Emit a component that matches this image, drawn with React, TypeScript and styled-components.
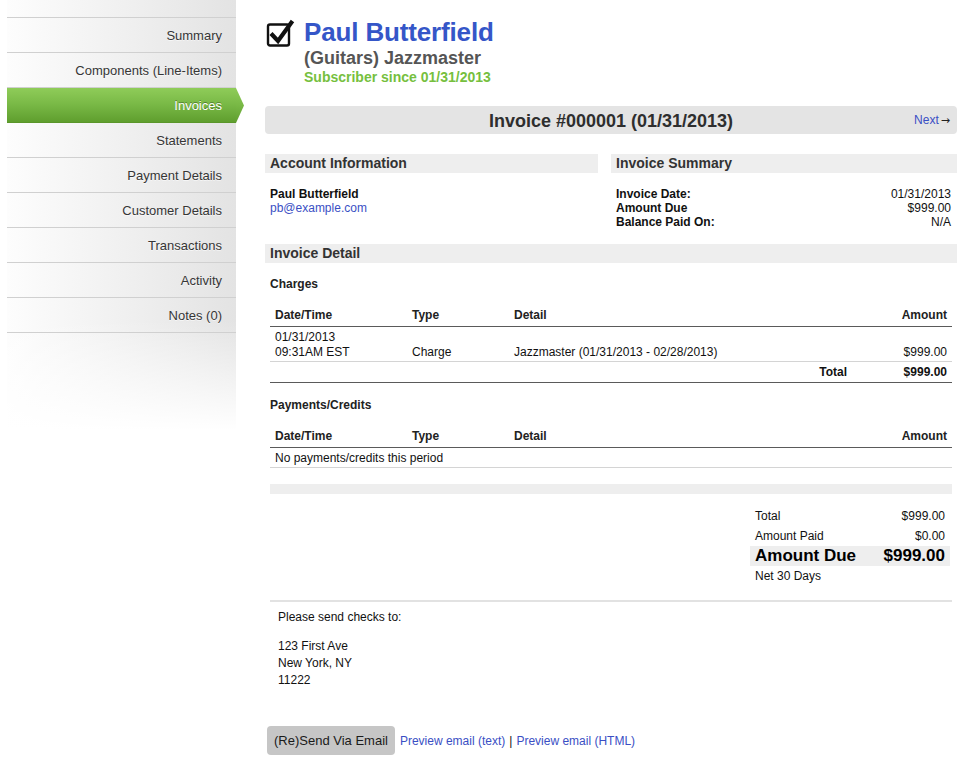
import React from 'react';
import styled, { createGlobalStyle, css } from 'styled-components';

const GlobalStyle = createGlobalStyle`
  html, body { margin: 0; padding: 0; background: #fff; }
  body {
    font-family: "Liberation Sans", Arial, Helvetica, sans-serif;
    color: #111;
  }
  a { color: #3a4fc4; text-decoration: none; }
`;

const Page = styled.div`
  display: flex;
  align-items: flex-start;
  width: 964px;
  min-height: 758px;
`;

const Sidebar = styled.nav`
  flex: 0 0 229px;
  margin-left: 7px;
  height: 440px;
  padding-top: 17px;
  box-sizing: border-box;
  background:
    linear-gradient(to bottom, rgba(255, 255, 255, 0) 320px, #fff 430px),
    linear-gradient(to right, #fdfdfd 0%, #f3f3f3 40%, #e3e3e3 100%);
`;

const NavList = styled.ul`
  list-style: none;
  margin: 0;
  padding: 0;
  border-top: 1px solid #d0d0d0;
`;

const greenGradient = 'linear-gradient(to bottom, #8fcc59 0%, #78b845 50%, #5f9e2e 100%)';

const NavItem = styled.li<{ $active?: boolean }>`
  position: relative;
  height: 34px;
  line-height: 36px;
  border-bottom: 1px solid #d0d0d0;
  padding-right: 14px;
  text-align: right;
  font-size: 13px;
  color: #363636;
  text-shadow: 0 1px 0 rgba(255, 255, 255, 0.6);
  ${(p) =>
    p.$active &&
    css`
      background: ${greenGradient};
      color: #fff;
      text-shadow: 0 -1px 0 rgba(0, 0, 0, 0.35);
      border-bottom-color: #5a962a;
      &::after {
        content: '';
        position: absolute;
        top: 0;
        bottom: -1px;
        right: -8px;
        width: 8px;
        background: ${greenGradient};
        clip-path: polygon(0 0, 100% 50%, 0 100%);
      }
    `}
`;

const Main = styled.main`
  margin-left: 29px;
  width: 692px;
  padding-top: 18px;
`;

const Header = styled.header`
  display: flex;
  align-items: flex-start;
`;

const CheckIcon = styled.svg`
  flex: 0 0 auto;
  width: 30px;
  height: 30px;
  margin-top: 0;
  margin-right: 9px;
`;

const HeaderText = styled.div`
  display: flex;
  flex-direction: column;
`;

const Name = styled.h1`
  margin: 0;
  font-size: 26px;
  line-height: 28px;
  font-weight: bold;
  color: #3556c8;
  letter-spacing: -0.15px;
`;

const Product = styled.div`
  margin-top: 2px;
  font-size: 18px;
  line-height: 20px;
  font-weight: bold;
  color: #555;
`;

const Since = styled.div`
  margin-top: 1px;
  font-size: 14px;
  line-height: 17px;
  font-weight: bold;
  color: #76bf3e;
`;

const InvoiceBar = styled.div`
  margin-top: 20px;
  height: 28px;
  background: #e4e4e4;
  border-radius: 4px;
  display: grid;
  grid-template-columns: 1fr auto 1fr;
  align-items: center;
`;

const InvoiceTitle = styled.h2`
  grid-column: 2;
  margin: 0;
  font-size: 18px;
  line-height: 28px;
  font-weight: bold;
  color: #2e2e2e;
`;

const NextLink = styled.a`
  grid-column: 3;
  justify-self: end;
  padding-right: 7px;
  font-size: 12px;
  line-height: 28px;
`;

const Arrow = styled.span`
  font-family: "DejaVu Sans", sans-serif;
  font-size: 11px;
  color: #222;
  margin-left: 2px;
`;

const Columns = styled.div`
  margin-top: 20px;
  display: grid;
  grid-template-columns: 333px 1fr;
  column-gap: 13px;
`;

const SectionHeader = styled.h3`
  margin: 0;
  height: 19px;
  line-height: 19px;
  background: #eeeeee;
  padding-left: 5px;
  font-size: 14px;
  font-weight: bold;
  color: #333;
`;

const SectionBody = styled.div`
  padding: 14px 6px 0 5px;
  font-size: 12px;
  line-height: 14px;
  color: #111;
`;

const Strong = styled.div`
  font-weight: bold;
`;

const SummaryRow = styled.div`
  display: flex;
  justify-content: space-between;
`;

const DetailSection = styled.section`
  margin-top: 15px;
`;

const DetailBody = styled.div`
  padding: 0 5px;
`;

const SubTitle = styled.h4<{ $gap: number }>`
  margin: ${(p) => p.$gap}px 0 0;
  font-size: 12px;
  line-height: 15px;
  font-weight: bold;
  color: #222;
`;

const Table = styled.table`
  width: 100%;
  margin-top: 11px;
  border-collapse: collapse;
  table-layout: fixed;
  font-size: 12px;
  color: #111;
`;

const Th = styled.th<{ $right?: boolean }>`
  text-align: ${(p) => (p.$right ? 'right' : 'left')};
  font-weight: bold;
  padding: 5px 5px 3px;
  line-height: 15px;
  border-bottom: 1px solid #5a5a5a;
  color: #222;
`;

const Td = styled.td<{ $right?: boolean; $bold?: boolean; $strong?: boolean }>`
  text-align: ${(p) => (p.$right ? 'right' : 'left')};
  font-weight: ${(p) => (p.$bold ? 'bold' : 'normal')};
  vertical-align: bottom;
  padding: ${(p) => (p.$strong ? '3px 5px 2px' : '3px 5px 1px')};
  line-height: 15px;
  border-bottom: 1px solid ${(p) => (p.$strong ? '#5a5a5a' : '#d4d4d4')};
`;

const Spacer = styled.div`
  margin-top: 16px;
  height: 10px;
  background: #eeeeee;
`;

const TotalsBox = styled.div`
  width: 200px;
  margin: 12px 2px 0 auto;
  font-size: 12px;
  color: #111;
`;

const TotalsRow = styled.div<{ $big?: boolean }>`
  display: flex;
  justify-content: space-between;
  padding: 0 5px;
  line-height: 20px;
  ${(p) =>
    p.$big &&
    css`
      background: #eeeeee;
      font-size: 17px;
      font-weight: bold;
      color: #000;
    `}
`;

const Divider = styled.hr`
  margin: 14px 5px 0;
  border: none;
  border-top: 2px solid #e2e2e2;
`;

const Remit = styled.div`
  padding-left: 13px;
  font-size: 12px;
  line-height: 17px;
  color: #111;
`;

const RemitLabel = styled.p`
  margin: 7px 0 0;
`;

const Address = styled.p`
  margin: 12px 0 0;
`;

const Actions = styled.div`
  margin-top: 37px;
  padding-left: 2px;
  display: flex;
  align-items: center;
  font-size: 12px;
`;

const Button = styled.button`
  height: 29px;
  padding: 0 7px;
  border: none;
  border-radius: 4px;
  background: #c6c6c6;
  font-family: inherit;
  font-size: 13px;
  color: #1a1a1a;
  margin-right: 5px;
`;

const Sep = styled.span`
  color: #111;
  margin: 0 4px;
`;

const navItems = [
  'Summary',
  'Components (Line-Items)',
  'Invoices',
  'Statements',
  'Payment Details',
  'Customer Details',
  'Transactions',
  'Activity',
  'Notes (0)',
];

function LineTableHead() {
  return (
    <>
      <colgroup>
        <col style={{ width: 137 }} />
        <col style={{ width: 102 }} />
        <col />
        <col style={{ width: 100 }} />
      </colgroup>
      <thead>
        <tr>
          <Th>Date/Time</Th>
          <Th>Type</Th>
          <Th>Detail</Th>
          <Th $right>Amount</Th>
        </tr>
      </thead>
    </>
  );
}

export default function App() {
  return (
    <>
      <GlobalStyle />
      <Page>
        <Sidebar>
          <NavList>
            {navItems.map((item) => (
              <NavItem key={item} $active={item === 'Invoices'}>
                {item}
              </NavItem>
            ))}
          </NavList>
        </Sidebar>
        <Main>
          <Header>
            <CheckIcon viewBox="0 0 30 30">
              <rect x="3" y="6.5" width="21" height="21" rx="2" fill="none" stroke="#111" strokeWidth="2.4" />
              <polyline
                points="6,15.5 13,23 27.5,3"
                fill="none"
                stroke="#111"
                strokeWidth="4.2"
                strokeLinejoin="miter"
              />
            </CheckIcon>
            <HeaderText>
              <Name>Paul Butterfield</Name>
              <Product>(Guitars) Jazzmaster</Product>
              <Since>Subscriber since 01/31/2013</Since>
            </HeaderText>
          </Header>

          <InvoiceBar>
            <InvoiceTitle>Invoice #000001 (01/31/2013)</InvoiceTitle>
            <NextLink href="#">
              Next<Arrow>→</Arrow>
            </NextLink>
          </InvoiceBar>

          <Columns>
            <section>
              <SectionHeader>Account Information</SectionHeader>
              <SectionBody>
                <Strong>Paul Butterfield</Strong>
                <a href="#">pb@example.com</a>
              </SectionBody>
            </section>
            <section>
              <SectionHeader>Invoice Summary</SectionHeader>
              <SectionBody>
                <SummaryRow>
                  <Strong>Invoice Date:</Strong>
                  <span>01/31/2013</span>
                </SummaryRow>
                <SummaryRow>
                  <Strong>Amount Due</Strong>
                  <span>$999.00</span>
                </SummaryRow>
                <SummaryRow>
                  <Strong>Balance Paid On:</Strong>
                  <span>N/A</span>
                </SummaryRow>
              </SectionBody>
            </section>
          </Columns>

          <DetailSection>
            <SectionHeader>Invoice Detail</SectionHeader>
            <DetailBody>
              <SubTitle $gap={14}>Charges</SubTitle>
              <Table>
                <LineTableHead />
                <tbody>
                  <tr>
                    <Td>
                      01/31/2013
                      <br />
                      09:31AM EST
                    </Td>
                    <Td>Charge</Td>
                    <Td>Jazzmaster (01/31/2013 - 02/28/2013)</Td>
                    <Td $right>$999.00</Td>
                  </tr>
                  <tr>
                    <Td colSpan={3} $right $bold $strong>
                      Total
                    </Td>
                    <Td $right $bold $strong>
                      $999.00
                    </Td>
                  </tr>
                </tbody>
              </Table>

              <SubTitle $gap={15}>Payments/Credits</SubTitle>
              <Table>
                <LineTableHead />
                <tbody>
                  <tr>
                    <Td colSpan={4}>No payments/credits this period</Td>
                  </tr>
                </tbody>
              </Table>

              <Spacer />

              <TotalsBox>
                <TotalsRow>
                  <span>Total</span>
                  <span>$999.00</span>
                </TotalsRow>
                <TotalsRow>
                  <span>Amount Paid</span>
                  <span>$0.00</span>
                </TotalsRow>
                <TotalsRow $big>
                  <span>Amount Due</span>
                  <span>$999.00</span>
                </TotalsRow>
                <TotalsRow>
                  <span>Net 30 Days</span>
                </TotalsRow>
              </TotalsBox>
            </DetailBody>
          </DetailSection>

          <Divider />

          <Remit>
            <RemitLabel>Please send checks to:</RemitLabel>
            <Address>
              123 First Ave
              <br />
              New York, NY
              <br />
              11222
            </Address>
          </Remit>

          <Actions>
            <Button type="button">(Re)Send Via Email</Button>
            <a href="#">Preview email (text)</a>
            <Sep>|</Sep>
            <a href="#">Preview email (HTML)</a>
          </Actions>
        </Main>
      </Page>
    </>
  );
}
